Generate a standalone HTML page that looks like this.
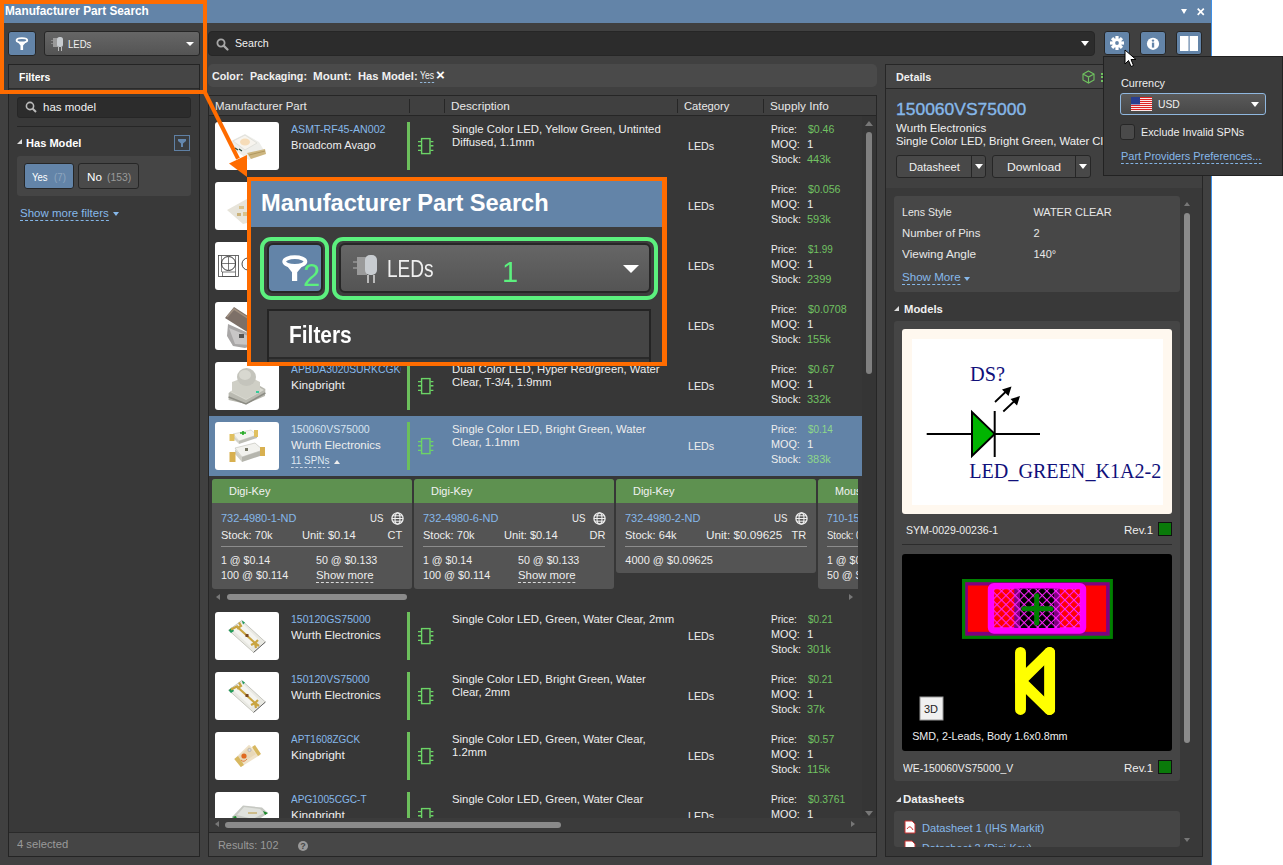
<!DOCTYPE html><html><head><meta charset="utf-8"><style>
*{box-sizing:border-box;margin:0;padding:0}
html,body{width:1283px;height:865px;overflow:hidden;background:#fff}
body{font-family:"Liberation Sans", sans-serif;font-size:11.5px;color:#e6e6e6;position:relative}
.ab{position:absolute}
.t{position:absolute;white-space:nowrap;line-height:14px}
.lnk{color:#86b8ea}
.grn{color:#71c162}
</style></head><body>
<div class="ab" style="left:0;top:0;width:1212px;height:865px;background:#404040"></div><div class="ab" style="left:1211px;top:0;width:1px;height:865px;background:#3d8fe6"></div><div class="ab" style="left:0;top:0;width:1211px;height:23px;background:#6384a8"></div><div class="t" style="left:5px;top:4px;font-weight:bold;font-size:12px;color:#fff;transform:scaleX(0.9848);transform-origin:0 0">Manufacturer Part Search</div><div class="ab" style="left:1181px;top:9px;width:0;height:0;border-left:3.5px solid transparent;border-right:3.5px solid transparent;border-top:5.5px solid #fff"></div><svg class="ab" style="left:1197px;top:8px" width="7.5" height="7.5" viewBox="0 0 7.5 7.5"><path d="M0.7 0.7 L6.8 6.8 M6.8 0.7 L0.7 6.8" stroke="#fff" stroke-width="1.7"/></svg><div class="ab" style="left:8px;top:31px;width:28px;height:25px;background:#6384a8;border:1px solid #262626;border-radius:3px"></div><svg class="ab" style="left:14px;top:36px" width="16" height="16" viewBox="0 0 16 16"><ellipse cx="7.9" cy="4.3" rx="5.3" ry="2.2" fill="none" stroke="#fff" stroke-width="1.9"/><path d="M2.6 4.8 Q8 8.2 13.2 4.8 L9.1 9.6 L9.1 14 L6.5 14 L6.5 9.6 Z" fill="#fff"/></svg><div class="ab" style="left:44px;top:31px;width:156px;height:25px;background:linear-gradient(#666,#545454);border:1px solid #262626;border-radius:3px"></div><svg class="ab" style="left:51px;top:36px" width="14" height="15" viewBox="0 0 14 15"><rect x="2" y="2" width="5" height="9" fill="#9a9a9a"/><rect x="6" y="1" width="6" height="10" rx="2.5" fill="#c8ccd0"/><rect x="7" y="11" width="1" height="4" fill="#bbb"/><rect x="10" y="11" width="1" height="4" fill="#bbb"/><rect x="0" y="4" width="2" height="1" fill="#888"/><rect x="0" y="7" width="2" height="1" fill="#888"/></svg><div class="t" style="left:68px;top:37px;color:#f0f0f0;transform:scaleX(0.8283);transform-origin:0 0">LEDs</div><div class="ab" style="left:186px;top:42px;width:0;height:0;border-left:4.25px solid transparent;border-right:4.25px solid transparent;border-top:4.5px solid #fff"></div><div class="ab" style="left:8px;top:64px;width:192px;height:793px;background:#393939;border:1px solid #242424"></div><div class="ab" style="left:9px;top:65px;width:190px;height:24px;background:#454545;border-bottom:1px solid #2a2a2a"></div><div class="t" style="left:19px;top:70px;font-weight:bold;font-size:11.5px;color:#fff;transform:scaleX(0.9087);transform-origin:0 0">Filters</div><div class="ab" style="left:17px;top:97px;width:174px;height:21px;background:#2c2c2c;border:1px solid #262626;border-radius:3px"></div><svg class="ab" style="left:25px;top:101px" width="12" height="12" viewBox="0 0 12 12"><circle cx="5" cy="5" r="3.6" fill="none" stroke="#bbb" stroke-width="1.6"/><path d="M7.5 7.5 L11 11" stroke="#bbb" stroke-width="2"/></svg><div class="t" style="left:42.5px;top:100px;color:#f0f0f0;transform:scaleX(0.9980);transform-origin:0 0">has model</div><div class="ab" style="left:17px;top:126px;width:174px;height:1px;background:#262626"></div><div class="ab" style="left:17px;top:139px;width:0;height:0;border-left:5px solid transparent;border-bottom:5px solid #ddd"></div><div class="t" style="left:26px;top:136px;font-weight:bold;color:#fff;transform:scaleX(0.9631);transform-origin:0 0">Has Model</div><div class="ab" style="left:174px;top:135px;width:16px;height:16px;border:1px solid #5f80a4;background:#3a3d40"></div><svg class="ab" style="left:177px;top:138px" width="10" height="10" viewBox="0 0 10 10"><path d="M1 1 H9 V3 L6 5.5 V9 H4 V5.5 L1 3 Z" fill="#6487ad"/></svg><div class="ab" style="left:17px;top:156px;width:174px;height:40px;background:#454545;border-radius:3px"></div><div class="ab" style="left:24px;top:163px;width:50px;height:26px;background:#6384a8;border:1px solid #262626;border-radius:3px"></div><div class="t" style="left:32px;top:170px;color:#fff;transform:scaleX(0.8311);transform-origin:0 0">Yes</div><div class="t" style="left:54.2px;top:170px;color:#8ea6bf;transform:scaleX(0.8436);transform-origin:0 0">(7)</div><div class="ab" style="left:78px;top:163px;width:61px;height:26px;background:#4a4a4a;border:1px solid #262626;border-radius:3px"></div><div class="t" style="left:86.5px;top:170px;color:#fff;transform:scaleX(1.0136);transform-origin:0 0">No</div><div class="t" style="left:107px;top:170px;color:#9a9a9a;transform:scaleX(0.9031);transform-origin:0 0">(153)</div><div class="t lnk" style="left:20.4px;top:207px;border-bottom:1px dashed #86b8ea;line-height:13px;transform:scaleX(0.9991);transform-origin:0 0">Show more filters</div><div class="ab" style="left:113px;top:212px;width:0;height:0;border-left:3.5px solid transparent;border-right:3.5px solid transparent;border-top:4px solid #86b8ea"></div><div class="ab" style="left:9px;top:832px;width:190px;height:24px;background:#454545;border-top:1px solid #2a2a2a"></div><div class="t" style="left:17px;top:837px;color:#9a9a9a;transform:scaleX(0.9764);transform-origin:0 0">4 selected</div>
<div class="ab" style="left:208px;top:31px;width:887px;height:25px;background:#2c2c2c;border:1px solid #262626;border-radius:4px"></div><svg class="ab" style="left:216px;top:37.5px" width="13" height="13" viewBox="0 0 13 13"><circle cx="5" cy="5" r="3.6" fill="none" stroke="#a8a8a8" stroke-width="1.8"/><path d="M7.6 7.6 L11.5 11.5" stroke="#a8a8a8" stroke-width="2.2" stroke-linecap="round"/></svg><div class="t" style="left:235px;top:36px;color:#f0f0f0;transform:scaleX(0.9239);transform-origin:0 0">Search</div><div class="ab" style="left:1081px;top:41px;width:0;height:0;border-left:4.5px solid transparent;border-right:4.5px solid transparent;border-top:5px solid #fff"></div><div class="ab" style="left:208px;top:64px;width:669px;height:23px;background:#4a4a4a;border-radius:5px"></div><div class="t" style="left:212px;top:69px;font-weight:bold;color:#f0f0f0;font-size:11px;transform:scaleX(0.9773);transform-origin:0 0">Color:</div><div class="t" style="left:249.7px;top:69px;font-weight:bold;color:#f0f0f0;font-size:11px;transform:scaleX(0.9703);transform-origin:0 0">Packaging:</div><div class="t" style="left:312.6px;top:69px;font-weight:bold;color:#f0f0f0;font-size:11px;transform:scaleX(1.0560);transform-origin:0 0">Mount:</div><div class="t" style="left:357.5px;top:69px;font-weight:bold;color:#f0f0f0;font-size:11px;transform:scaleX(1.0171);transform-origin:0 0">Has Model:</div><div class="t" style="left:420px;top:69px;color:#f0f0f0;border-bottom:1px dashed #9cc3ea;line-height:13px;font-size:11px;transform:scaleX(0.7861);transform-origin:0 0">Yes</div><div class="t" style="left:436px;top:68px;font-weight:bold;font-size:15px;color:#fff">&#215;</div><div class="ab" style="left:208px;top:95px;width:669px;height:738px;background:#373737;border:1px solid #262626"></div><div class="ab" style="left:209px;top:96px;width:667px;height:20px;background:#404040;border-bottom:1px solid #262626"></div><div class="ab" style="left:409px;top:99px;width:1px;height:14px;background:#262626"></div><div class="ab" style="left:444px;top:99px;width:1px;height:14px;background:#262626"></div><div class="ab" style="left:677px;top:99px;width:1px;height:14px;background:#262626"></div><div class="ab" style="left:763px;top:99px;width:1px;height:14px;background:#262626"></div><div class="t" style="left:215.4px;top:99px;color:#e8e8e8;transform:scaleX(0.9963);transform-origin:0 0">Manufacturer Part</div><div class="t" style="left:451.3px;top:99px;color:#e8e8e8;transform:scaleX(1.0205);transform-origin:0 0">Description</div><div class="t" style="left:684.2px;top:99px;color:#e8e8e8;transform:scaleX(0.9720);transform-origin:0 0">Category</div><div class="t" style="left:770.2px;top:99px;color:#e8e8e8;transform:scaleX(1.0202);transform-origin:0 0">Supply Info</div><div class="ab" style="left:862px;top:116px;width:14px;height:700px;background:#353535"></div><div class="ab" style="left:865px;top:121px;width:0;height:0;border-left:4px solid transparent;border-right:4px solid transparent;border-bottom:5px solid #777"></div><div class="ab" style="left:866px;top:132px;width:6px;height:242px;background:#808080;border-radius:3px"></div><div class="ab" style="left:865px;top:811px;width:0;height:0;border-left:4px solid transparent;border-right:4px solid transparent;border-top:5px solid #777"></div><div class="ab" style="left:209px;top:116px;width:653px;height:702px;overflow:hidden"><div class="ab" style="left:6px;top:6px;width:64px;height:48px;background:#fff;border-radius:3px;overflow:hidden"><svg width="64" height="48"><path d="M16 19 L30 12 L44 20 L50 30 L34 38 L18 27 Z" fill="#eeeeea"/><path d="M18 19 L30 13 L42 21 L30 28 Z" fill="#f7f4ee" stroke="#dcdcd6" stroke-width="0.8"/><ellipse cx="30" cy="20" rx="5" ry="3.5" fill="#f6dcb8"/><path d="M32 31 L50 27 L51 32 L36 37 Z" fill="#cdb680"/><path d="M34 33 L50 29" stroke="#a88f55" stroke-width="0.8"/><path d="M20 26 L23 28 M24 27 L27 29" stroke="#2a4a3a" stroke-width="1.2"/></svg></div><div class="ab" style="left:82px;top:6px;width:110px;height:15px;overflow:hidden"><div class="t" style="left:0.3px;top:0;color:#86b8ea;font-size:11px;transform:scaleX(0.9663);transform-origin:0 0">ASMT-RF45-AN002</div></div><div class="t" style="left:82.3px;top:22px;color:#eee;font-size:11.2px;transform:scaleX(0.9954);transform-origin:0 0">Broadcom Avago</div><div class="ab" style="left:198px;top:6px;width:3px;height:48px;background:#6cbf5c"></div><svg class="ab" style="left:208px;top:21px" width="17" height="18" viewBox="0 0 17 18"><rect x="4.6" y="1.6" width="8.4" height="15" fill="none" stroke="#6cd466" stroke-width="1.4"/><path d="M1 4.6H4M1 8.7H4M1 13.4H4M13.4 4.6H16.4M13.4 8.7H16.4M13.4 13.4H16.4" stroke="#6cd466" stroke-width="1.4"/></svg><div class="t" style="left:242.5px;top:6px;color:#eee;font-size:11.2px;transform:scaleX(1.014);transform-origin:0 0">Single Color LED, Yellow Green, Untinted</div><div class="t" style="left:242.5px;top:19px;color:#eee;font-size:11.2px;transform:scaleX(1.014);transform-origin:0 0">Diffused, 1.1mm</div><div class="t" style="left:479.4px;top:23px;color:#eee;transform:scaleX(0.9305);transform-origin:0 0">LEDs</div><div class="t" style="left:561.5px;top:6px;color:#eee;transform:scaleX(0.8801);transform-origin:0 0">Price:</div><div class="t" style="left:598.7px;top:6px;color:#71c162;font-size:11px;transform:scaleX(0.9559);transform-origin:0 0">$0.46</div><div class="t" style="left:561.5px;top:21px;color:#eee;transform:scaleX(0.9419);transform-origin:0 0">MOQ:</div><div class="t" style="left:598px;top:21px;color:#eee">1</div><div class="t" style="left:561.5px;top:36px;color:#eee;transform:scaleX(0.9414);transform-origin:0 0">Stock:</div><div class="t" style="left:598px;top:36px;color:#71c162;font-size:11px">443k</div><div class="ab" style="left:6px;top:66px;width:64px;height:48px;background:#fff;border-radius:3px;overflow:hidden"><svg width="64" height="48"><path d="M12 28 L30 18 L34 16 L36 40 L28 42 Z" fill="#e7e4da"/><rect x="24" y="24" width="5" height="3" fill="#d9c28c"/><rect x="28" y="30" width="5" height="4" fill="#d9c28c"/><rect x="22" y="31" width="4" height="3" fill="#cbb27a"/></svg></div><div class="ab" style="left:198px;top:66px;width:3px;height:48px;background:#6cbf5c"></div><svg class="ab" style="left:208px;top:81px" width="17" height="18" viewBox="0 0 17 18"><rect x="4.6" y="1.6" width="8.4" height="15" fill="none" stroke="#6cd466" stroke-width="1.4"/><path d="M1 4.6H4M1 8.7H4M1 13.4H4M13.4 4.6H16.4M13.4 8.7H16.4M13.4 13.4H16.4" stroke="#6cd466" stroke-width="1.4"/></svg><div class="t" style="left:242.5px;top:66px;color:#eee;font-size:11.2px;transform:scaleX(1.014);transform-origin:0 0"></div><div class="t" style="left:479.4px;top:83px;color:#eee;transform:scaleX(0.9305);transform-origin:0 0">LEDs</div><div class="t" style="left:561.5px;top:66px;color:#eee;transform:scaleX(0.8801);transform-origin:0 0">Price:</div><div class="t" style="left:598.7px;top:66px;color:#71c162;font-size:11px;transform:scaleX(0.9664);transform-origin:0 0">$0.056</div><div class="t" style="left:561.5px;top:81px;color:#eee;transform:scaleX(0.9419);transform-origin:0 0">MOQ:</div><div class="t" style="left:598px;top:81px;color:#eee">1</div><div class="t" style="left:561.5px;top:96px;color:#eee;transform:scaleX(0.9414);transform-origin:0 0">Stock:</div><div class="t" style="left:598px;top:96px;color:#71c162;font-size:11px">593k</div><div class="ab" style="left:6px;top:126px;width:64px;height:48px;background:#fff;border-radius:3px;overflow:hidden"><svg width="64" height="48"><rect x="3.5" y="13.5" width="20" height="21" fill="none" stroke="#444" stroke-width="0.8"/><path d="M6.5 13.5 V30 M20.5 13.5 V30" stroke="#555" stroke-width="0.7"/><circle cx="13.5" cy="21.5" r="7" fill="none" stroke="#333" stroke-width="1"/><path d="M13.5 15V28M7 21.5H20" stroke="#444" stroke-width="0.7"/><rect x="7.5" y="30" width="13" height="4.5" fill="none" stroke="#444" stroke-width="0.7"/><circle cx="33" cy="22" r="6" fill="none" stroke="#333" stroke-width="0.9"/></svg></div><div class="ab" style="left:198px;top:126px;width:3px;height:48px;background:#6cbf5c"></div><svg class="ab" style="left:208px;top:141px" width="17" height="18" viewBox="0 0 17 18"><rect x="4.6" y="1.6" width="8.4" height="15" fill="none" stroke="#6cd466" stroke-width="1.4"/><path d="M1 4.6H4M1 8.7H4M1 13.4H4M13.4 4.6H16.4M13.4 8.7H16.4M13.4 13.4H16.4" stroke="#6cd466" stroke-width="1.4"/></svg><div class="t" style="left:242.5px;top:126px;color:#eee;font-size:11.2px;transform:scaleX(1.014);transform-origin:0 0"></div><div class="t" style="left:479.4px;top:143px;color:#eee;transform:scaleX(0.9305);transform-origin:0 0">LEDs</div><div class="t" style="left:561.5px;top:126px;color:#eee;transform:scaleX(0.8801);transform-origin:0 0">Price:</div><div class="t" style="left:598.7px;top:126px;color:#71c162;font-size:11px;transform:scaleX(0.8975);transform-origin:0 0">$1.99</div><div class="t" style="left:561.5px;top:141px;color:#eee;transform:scaleX(0.9419);transform-origin:0 0">MOQ:</div><div class="t" style="left:598px;top:141px;color:#eee">1</div><div class="t" style="left:561.5px;top:156px;color:#eee;transform:scaleX(0.9414);transform-origin:0 0">Stock:</div><div class="t" style="left:598px;top:156px;color:#71c162;font-size:11px">2399</div><div class="ab" style="left:6px;top:186px;width:64px;height:48px;background:#fff;border-radius:3px;overflow:hidden"><svg width="64" height="48"><path d="M10 16 L19 5 L50 25 L42 36 Z" fill="#7d7068"/><path d="M12 15 L19 7 L48 26" stroke="#a09080" stroke-width="1.5" fill="none"/><path d="M13 22 L40 34 L44 42 L30 46 L18 44 L12 34 Z" fill="#a8a6a6"/><path d="M14 26 L38 36 L36 43 L20 42 Z" fill="#c8c6c6"/><rect x="24" y="32" width="5" height="4" fill="#555"/></svg></div><div class="ab" style="left:198px;top:186px;width:3px;height:48px;background:#6cbf5c"></div><svg class="ab" style="left:208px;top:201px" width="17" height="18" viewBox="0 0 17 18"><rect x="4.6" y="1.6" width="8.4" height="15" fill="none" stroke="#6cd466" stroke-width="1.4"/><path d="M1 4.6H4M1 8.7H4M1 13.4H4M13.4 4.6H16.4M13.4 8.7H16.4M13.4 13.4H16.4" stroke="#6cd466" stroke-width="1.4"/></svg><div class="t" style="left:242.5px;top:186px;color:#eee;font-size:11.2px;transform:scaleX(1.014);transform-origin:0 0"></div><div class="t" style="left:479.4px;top:203px;color:#eee;transform:scaleX(0.9305);transform-origin:0 0">LEDs</div><div class="t" style="left:561.5px;top:186px;color:#eee;transform:scaleX(0.8801);transform-origin:0 0">Price:</div><div class="t" style="left:598.7px;top:186px;color:#71c162;font-size:11px;transform:scaleX(0.9737);transform-origin:0 0">$0.0708</div><div class="t" style="left:561.5px;top:201px;color:#eee;transform:scaleX(0.9419);transform-origin:0 0">MOQ:</div><div class="t" style="left:598px;top:201px;color:#eee">1</div><div class="t" style="left:561.5px;top:216px;color:#eee;transform:scaleX(0.9414);transform-origin:0 0">Stock:</div><div class="t" style="left:598px;top:216px;color:#71c162;font-size:11px">155k</div><div class="ab" style="left:6px;top:246px;width:64px;height:48px;background:#fff;border-radius:3px;overflow:hidden"><svg width="64" height="48"><path d="M13.6 31 L33 17 L50.4 27 L50 34 L31 42 L13.6 38 Z" fill="#b9b9b0"/><path d="M15 30 L33 19 L49 28 L31 38 Z" fill="#d9d9d0"/><path d="M17 20 L33 14 L45 20 L45 30 L31 37 L17 30 Z" fill="#cfcfc6"/><ellipse cx="31.5" cy="15" rx="9.5" ry="9" fill="#c4c4bc"/><ellipse cx="30" cy="13" rx="6" ry="5" fill="#d8d8d0"/><path d="M13.6 35 L31 42 L50.4 31" stroke="#8c8c84" stroke-width="1.5" fill="none"/><rect x="41" y="29" width="3" height="2" fill="#3c9"/></svg></div><div class="ab" style="left:82px;top:246px;width:110px;height:15px;overflow:hidden"><div class="t" style="left:0.3px;top:0;color:#86b8ea;font-size:11px;transform:scaleX(0.9423);transform-origin:0 0">APBDA3020SURKCGKC</div></div><div class="t" style="left:82.3px;top:262px;color:#eee;font-size:11.2px;transform:scaleX(1.0669);transform-origin:0 0">Kingbright</div><div class="ab" style="left:198px;top:246px;width:3px;height:48px;background:#6cbf5c"></div><svg class="ab" style="left:208px;top:261px" width="17" height="18" viewBox="0 0 17 18"><rect x="4.6" y="1.6" width="8.4" height="15" fill="none" stroke="#6cd466" stroke-width="1.4"/><path d="M1 4.6H4M1 8.7H4M1 13.4H4M13.4 4.6H16.4M13.4 8.7H16.4M13.4 13.4H16.4" stroke="#6cd466" stroke-width="1.4"/></svg><div class="t" style="left:242.5px;top:246px;color:#eee;font-size:11.2px;transform:scaleX(1.014);transform-origin:0 0">Dual Color LED, Hyper Red/green, Water</div><div class="t" style="left:242.5px;top:259px;color:#eee;font-size:11.2px;transform:scaleX(1.014);transform-origin:0 0">Clear, T-3/4, 1.9mm</div><div class="t" style="left:479.4px;top:263px;color:#eee;transform:scaleX(0.9305);transform-origin:0 0">LEDs</div><div class="t" style="left:561.5px;top:246px;color:#eee;transform:scaleX(0.8801);transform-origin:0 0">Price:</div><div class="t" style="left:598.7px;top:246px;color:#71c162;font-size:11px;transform:scaleX(0.9559);transform-origin:0 0">$0.67</div><div class="t" style="left:561.5px;top:261px;color:#eee;transform:scaleX(0.9419);transform-origin:0 0">MOQ:</div><div class="t" style="left:598px;top:261px;color:#eee">1</div><div class="t" style="left:561.5px;top:276px;color:#eee;transform:scaleX(0.9414);transform-origin:0 0">Stock:</div><div class="t" style="left:598px;top:276px;color:#71c162;font-size:11px">332k</div><div class="ab" style="left:0;top:300px;width:653px;height:60px;background:#6283a7"></div><div class="ab" style="left:6px;top:306px;width:64px;height:48px;background:#fff;border-radius:3px;overflow:hidden"><svg width="64" height="48"><path d="M18 12 L36 8 L42 13 L24 19 Z" fill="#f4f4f0" stroke="#c8c8c0" stroke-width="0.6"/><path d="M18 13 L24 19 L24 22 L18 16 Z" fill="#d4d4cc"/><path d="M24 19 L42 13 L42 16 L24 22 Z" fill="#bdbdb5"/><rect x="14.5" y="12" width="5" height="7" fill="#e0c060"/><rect x="39" y="8" width="4" height="7" fill="#e0c060"/><path d="M25 11 H31 M28 9 V13" stroke="#22aa22" stroke-width="1.6"/><path d="M20 26 L40 21 L48 28 L27 35 Z" fill="#f2f2ee" stroke="#bdbdb5" stroke-width="0.6"/><path d="M27 35 L48 28 L48 33 L27 40 Z" fill="#b5b5ad"/><path d="M20 27 L27 35 L27 40 L20 32 Z" fill="#d0d0c8"/><rect x="14.5" y="30" width="6" height="10" fill="#d8b050"/><rect x="45" y="25" width="5" height="9" fill="#d8b050"/><rect x="30" y="26" width="3" height="3" fill="#776"/></svg></div><div class="ab" style="left:82px;top:306px;width:110px;height:15px;overflow:hidden"><div class="t" style="left:0.3px;top:0;color:#d7e3f0;font-size:11px;transform:scaleX(0.9603);transform-origin:0 0">150060VS75000</div></div><div class="t" style="left:82.3px;top:322px;color:#eee;font-size:11.2px;transform:scaleX(1.0266);transform-origin:0 0">Wurth Electronics</div><div class="t" style="left:82.3px;top:338px;color:#dfe8f2;font-size:11px;border-bottom:1px dashed #cfd9e5;line-height:13px;transform:scaleX(0.9004);transform-origin:0 0">11 SPNs</div><div class="ab" style="left:125px;top:344px;width:0;height:0;border-left:3px solid transparent;border-right:3px solid transparent;border-bottom:4px solid #eee"></div><div class="ab" style="left:198px;top:306px;width:3px;height:48px;background:#6cbf5c"></div><svg class="ab" style="left:208px;top:321px" width="17" height="18" viewBox="0 0 17 18"><rect x="4.6" y="1.6" width="8.4" height="15" fill="none" stroke="#6cd466" stroke-width="1.4"/><path d="M1 4.6H4M1 8.7H4M1 13.4H4M13.4 4.6H16.4M13.4 8.7H16.4M13.4 13.4H16.4" stroke="#6cd466" stroke-width="1.4"/></svg><div class="t" style="left:242.5px;top:306px;color:#eee;font-size:11.2px;transform:scaleX(1.014);transform-origin:0 0">Single Color LED, Bright Green, Water</div><div class="t" style="left:242.5px;top:319px;color:#eee;font-size:11.2px;transform:scaleX(1.014);transform-origin:0 0">Clear, 1.1mm</div><div class="t" style="left:479.4px;top:323px;color:#eee;transform:scaleX(0.9305);transform-origin:0 0">LEDs</div><div class="t" style="left:561.5px;top:306px;color:#eee;transform:scaleX(0.8801);transform-origin:0 0">Price:</div><div class="t" style="left:598.7px;top:306px;color:#8ed88a;font-size:11px;transform:scaleX(0.8975);transform-origin:0 0">$0.14</div><div class="t" style="left:561.5px;top:321px;color:#eee;transform:scaleX(0.9419);transform-origin:0 0">MOQ:</div><div class="t" style="left:598px;top:321px;color:#eee">1</div><div class="t" style="left:561.5px;top:336px;color:#eee;transform:scaleX(0.9414);transform-origin:0 0">Stock:</div><div class="t" style="left:598px;top:336px;color:#8ed88a;font-size:11px">383k</div><div class="ab" style="left:6px;top:496px;width:64px;height:48px;background:#fff;border-radius:3px;overflow:hidden"><svg width="64" height="48"><path d="M13.6 18.2 L26.8 8.5 L50.4 30 L38.6 40.4 Z" fill="#e9e9e3" stroke="#c8c8c0" stroke-width="1"/><path d="M18 18 L27 11 L44 28 L36 35 Z" fill="#f4f4f0"/><path d="M13.6 18.2 L17 15.5 L19 19 L16 21 Z" fill="#1f9a5a"/><path d="M26.8 8.5 L30 10.5 L28 12.5 Z" fill="#1f9a5a"/><path d="M16 17.5 L22 14.5 L24 17 M24 10.5 L26 14 L22 16.5 M23.5 16 L40 31 M36 33 L40 31 L44 34 M43 28 L40 31 L41 36" stroke="#c9a440" stroke-width="2.2" fill="none"/><rect x="30.5" y="22" width="3" height="3" fill="#7a4a20"/><path d="M38.6 40.4 L50.4 30" stroke="#666" stroke-width="1"/></svg></div><div class="ab" style="left:82px;top:496px;width:110px;height:15px;overflow:hidden"><div class="t" style="left:0.3px;top:0;color:#86b8ea;font-size:11px;transform:scaleX(0.9570);transform-origin:0 0">150120GS75000</div></div><div class="t" style="left:82.3px;top:512px;color:#eee;font-size:11.2px;transform:scaleX(1.0266);transform-origin:0 0">Wurth Electronics</div><div class="ab" style="left:198px;top:496px;width:3px;height:48px;background:#6cbf5c"></div><svg class="ab" style="left:208px;top:511px" width="17" height="18" viewBox="0 0 17 18"><rect x="4.6" y="1.6" width="8.4" height="15" fill="none" stroke="#6cd466" stroke-width="1.4"/><path d="M1 4.6H4M1 8.7H4M1 13.4H4M13.4 4.6H16.4M13.4 8.7H16.4M13.4 13.4H16.4" stroke="#6cd466" stroke-width="1.4"/></svg><div class="t" style="left:242.5px;top:496px;color:#eee;font-size:11.2px;transform:scaleX(1.014);transform-origin:0 0">Single Color LED, Green, Water Clear, 2mm</div><div class="t" style="left:479.4px;top:513px;color:#eee;transform:scaleX(0.9305);transform-origin:0 0">LEDs</div><div class="t" style="left:561.5px;top:496px;color:#eee;transform:scaleX(0.8801);transform-origin:0 0">Price:</div><div class="t" style="left:598.7px;top:496px;color:#71c162;font-size:11px;transform:scaleX(0.8975);transform-origin:0 0">$0.21</div><div class="t" style="left:561.5px;top:511px;color:#eee;transform:scaleX(0.9419);transform-origin:0 0">MOQ:</div><div class="t" style="left:598px;top:511px;color:#eee">1</div><div class="t" style="left:561.5px;top:526px;color:#eee;transform:scaleX(0.9414);transform-origin:0 0">Stock:</div><div class="t" style="left:598px;top:526px;color:#71c162;font-size:11px">301k</div><div class="ab" style="left:6px;top:556px;width:64px;height:48px;background:#fff;border-radius:3px;overflow:hidden"><svg width="64" height="48"><path d="M13.6 18.2 L26.8 8.5 L50.4 30 L38.6 40.4 Z" fill="#e9e9e3" stroke="#c8c8c0" stroke-width="1"/><path d="M18 18 L27 11 L44 28 L36 35 Z" fill="#f4f4f0"/><path d="M13.6 18.2 L17 15.5 L19 19 L16 21 Z" fill="#1f9a5a"/><path d="M26.8 8.5 L30 10.5 L28 12.5 Z" fill="#1f9a5a"/><path d="M16 17.5 L22 14.5 L24 17 M24 10.5 L26 14 L22 16.5 M23.5 16 L40 31 M36 33 L40 31 L44 34 M43 28 L40 31 L41 36" stroke="#c9a440" stroke-width="2.2" fill="none"/><rect x="30.5" y="22" width="3" height="3" fill="#7a4a20"/><path d="M38.6 40.4 L50.4 30" stroke="#666" stroke-width="1"/></svg></div><div class="ab" style="left:82px;top:556px;width:110px;height:15px;overflow:hidden"><div class="t" style="left:0.3px;top:0;color:#86b8ea;font-size:11px;transform:scaleX(0.9591);transform-origin:0 0">150120VS75000</div></div><div class="t" style="left:82.3px;top:572px;color:#eee;font-size:11.2px;transform:scaleX(1.0266);transform-origin:0 0">Wurth Electronics</div><div class="ab" style="left:198px;top:556px;width:3px;height:48px;background:#6cbf5c"></div><svg class="ab" style="left:208px;top:571px" width="17" height="18" viewBox="0 0 17 18"><rect x="4.6" y="1.6" width="8.4" height="15" fill="none" stroke="#6cd466" stroke-width="1.4"/><path d="M1 4.6H4M1 8.7H4M1 13.4H4M13.4 4.6H16.4M13.4 8.7H16.4M13.4 13.4H16.4" stroke="#6cd466" stroke-width="1.4"/></svg><div class="t" style="left:242.5px;top:556px;color:#eee;font-size:11.2px;transform:scaleX(1.014);transform-origin:0 0">Single Color LED, Bright Green, Water</div><div class="t" style="left:242.5px;top:569px;color:#eee;font-size:11.2px;transform:scaleX(1.014);transform-origin:0 0">Clear, 2mm</div><div class="t" style="left:479.4px;top:573px;color:#eee;transform:scaleX(0.9305);transform-origin:0 0">LEDs</div><div class="t" style="left:561.5px;top:556px;color:#eee;transform:scaleX(0.8801);transform-origin:0 0">Price:</div><div class="t" style="left:598.7px;top:556px;color:#71c162;font-size:11px;transform:scaleX(0.8975);transform-origin:0 0">$0.21</div><div class="t" style="left:561.5px;top:571px;color:#eee;transform:scaleX(0.9419);transform-origin:0 0">MOQ:</div><div class="t" style="left:598px;top:571px;color:#eee">1</div><div class="t" style="left:561.5px;top:586px;color:#eee;transform:scaleX(0.9414);transform-origin:0 0">Stock:</div><div class="t" style="left:598px;top:586px;color:#71c162;font-size:11px">37k</div><div class="ab" style="left:6px;top:616px;width:64px;height:48px;background:#fff;border-radius:3px;overflow:hidden"><svg width="64" height="48"><path d="M19.3 27 L34 12.8 L44.8 23.2 L25.8 35 Z" fill="#efe2c8"/><path d="M22 26 L34 15 L41 22 L27 31 Z" fill="#e8d8b8"/><path d="M19.3 27 L23 24 L29 33 L25.8 35 Z" fill="#d8b860"/><path d="M37 15 L40 13 L46 22 L43 24 Z" fill="#d8b860"/><circle cx="29" cy="24" r="2.6" fill="#e06a20"/><circle cx="34.5" cy="18" r="1.6" fill="#ddd" stroke="#999" stroke-width="0.5"/><path d="M26 28 Q29 31 32 27" stroke="#e08040" fill="none"/></svg></div><div class="ab" style="left:82px;top:616px;width:110px;height:15px;overflow:hidden"><div class="t" style="left:0.3px;top:0;color:#86b8ea;font-size:11px;transform:scaleX(0.9055);transform-origin:0 0">APT1608ZGCK</div></div><div class="t" style="left:82.3px;top:632px;color:#eee;font-size:11.2px;transform:scaleX(1.0669);transform-origin:0 0">Kingbright</div><div class="ab" style="left:198px;top:616px;width:3px;height:48px;background:#6cbf5c"></div><svg class="ab" style="left:208px;top:631px" width="17" height="18" viewBox="0 0 17 18"><rect x="4.6" y="1.6" width="8.4" height="15" fill="none" stroke="#6cd466" stroke-width="1.4"/><path d="M1 4.6H4M1 8.7H4M1 13.4H4M13.4 4.6H16.4M13.4 8.7H16.4M13.4 13.4H16.4" stroke="#6cd466" stroke-width="1.4"/></svg><div class="t" style="left:242.5px;top:616px;color:#eee;font-size:11.2px;transform:scaleX(1.014);transform-origin:0 0">Single Color LED, Green, Water Clear,</div><div class="t" style="left:242.5px;top:629px;color:#eee;font-size:11.2px;transform:scaleX(1.014);transform-origin:0 0">1.2mm</div><div class="t" style="left:479.4px;top:633px;color:#eee;transform:scaleX(0.9305);transform-origin:0 0">LEDs</div><div class="t" style="left:561.5px;top:616px;color:#eee;transform:scaleX(0.8801);transform-origin:0 0">Price:</div><div class="t" style="left:598.7px;top:616px;color:#71c162;font-size:11px;transform:scaleX(0.9559);transform-origin:0 0">$0.57</div><div class="t" style="left:561.5px;top:631px;color:#eee;transform:scaleX(0.9419);transform-origin:0 0">MOQ:</div><div class="t" style="left:598px;top:631px;color:#eee">1</div><div class="t" style="left:561.5px;top:646px;color:#eee;transform:scaleX(0.9414);transform-origin:0 0">Stock:</div><div class="t" style="left:598px;top:646px;color:#71c162;font-size:11px">115k</div><div class="ab" style="left:6px;top:676px;width:64px;height:48px;background:#fff;border-radius:3px;overflow:hidden"><svg width="64" height="48"><path d="M17 25 L28 13.5 L47 15.5 L53 21 L40 30 L20 30 Z" fill="#c6c8c2"/><path d="M22 23 L29 15 L45 17 L49 21 L38 27 Z" fill="#dfe1dc"/><path d="M33 21 H42" stroke="#c8b070" stroke-width="1.5"/><path d="M17 25 L21 24 L22 27 Z" fill="#1a8a2a"/><path d="M48 19 L53 21 L50 23 Z" fill="#1a8a2a"/></svg></div><div class="ab" style="left:82px;top:676px;width:110px;height:15px;overflow:hidden"><div class="t" style="left:0.3px;top:0;color:#86b8ea;font-size:11px;transform:scaleX(0.9154);transform-origin:0 0">APG1005CGC-T</div></div><div class="t" style="left:82.3px;top:692px;color:#eee;font-size:11.2px;transform:scaleX(1.0669);transform-origin:0 0">Kingbright</div><div class="ab" style="left:198px;top:676px;width:3px;height:48px;background:#6cbf5c"></div><svg class="ab" style="left:208px;top:691px" width="17" height="18" viewBox="0 0 17 18"><rect x="4.6" y="1.6" width="8.4" height="15" fill="none" stroke="#6cd466" stroke-width="1.4"/><path d="M1 4.6H4M1 8.7H4M1 13.4H4M13.4 4.6H16.4M13.4 8.7H16.4M13.4 13.4H16.4" stroke="#6cd466" stroke-width="1.4"/></svg><div class="t" style="left:242.5px;top:676px;color:#eee;font-size:11.2px;transform:scaleX(1.014);transform-origin:0 0">Single Color LED, Green, Water Clear</div><div class="t" style="left:479.4px;top:693px;color:#eee;transform:scaleX(0.9305);transform-origin:0 0">LEDs</div><div class="t" style="left:561.5px;top:676px;color:#eee;transform:scaleX(0.8801);transform-origin:0 0">Price:</div><div class="t" style="left:598.7px;top:676px;color:#71c162;font-size:11px;transform:scaleX(0.9333);transform-origin:0 0">$0.3761</div><div class="t" style="left:561.5px;top:691px;color:#eee;transform:scaleX(0.9419);transform-origin:0 0">MOQ:</div><div class="t" style="left:598px;top:691px;color:#eee">1</div><div class="t" style="left:561.5px;top:706px;color:#eee;transform:scaleX(0.9414);transform-origin:0 0">Stock:</div></div>
<div class="ab" style="left:209px;top:476px;width:653px;height:130px;background:#373737"></div><div class="ab" style="left:209px;top:476px;width:649px;height:130px;overflow:hidden"><div class="ab" style="left:3px;top:3px;width:200px;height:110px;background:#545454;border-radius:3px;overflow:hidden"><div class="ab" style="left:0;top:0;width:200px;height:24px;background:#5e9150"></div><div class="t" style="left:16.5px;top:5px;color:#f2f2f2;transform:scaleX(0.9541);transform-origin:0 0">Digi-Key</div><div class="t" style="left:9.3px;top:32px;color:#86b8ea;font-size:11px;transform:scaleX(0.9937);transform-origin:0 0">732-4980-1-ND</div><div class="t" style="left:157.6px;top:32px;color:#eee;transform:scaleX(0.8402);transform-origin:0 0">US</div><svg class="ab" style="left:179px;top:33px" width="13" height="13" viewBox="0 0 13 13"><circle cx="6.5" cy="6.5" r="5.6" fill="none" stroke="#eee" stroke-width="1.3"/><ellipse cx="6.5" cy="6.5" rx="2.5" ry="5.6" fill="none" stroke="#eee" stroke-width="1.1"/><path d="M1 6.5H12M2 3.8H11M2 9.2H11" stroke="#eee" stroke-width="1"/></svg><div class="t" style="left:9.3px;top:49px;color:#eee;transform:scaleX(0.9603);transform-origin:0 0">Stock: 70k</div><div class="t" style="left:90.4px;top:49px;color:#eee;transform:scaleX(0.9658);transform-origin:0 0">Unit: $0.14</div><div class="t" style="left:175.6px;top:49px;color:#eee;font-size:11px">CT</div><div class="ab" style="left:9px;top:67px;width:182px;height:1px;background:#8c8c8c"></div><div class="t" style="left:9.3px;top:74px;color:#eee;transform:scaleX(0.9231);transform-origin:0 0">1 @ $0.14</div><div class="t" style="left:103.6px;top:74px;color:#eee;transform:scaleX(0.9279);transform-origin:0 0">50 @ $0.133</div><div class="t" style="left:9.3px;top:89px;color:#eee;transform:scaleX(0.9380);transform-origin:0 0">100 @ $0.114</div><div class="t" style="left:103.6px;top:89px;color:#eee;border-bottom:1px dashed #ddd;line-height:14px;transform:scaleX(0.9885);transform-origin:0 0">Show more</div></div><div class="ab" style="left:205px;top:3px;width:200px;height:110px;background:#545454;border-radius:3px;overflow:hidden"><div class="ab" style="left:0;top:0;width:200px;height:24px;background:#5e9150"></div><div class="t" style="left:16.5px;top:5px;color:#f2f2f2;transform:scaleX(0.9541);transform-origin:0 0">Digi-Key</div><div class="t" style="left:9.3px;top:32px;color:#86b8ea;font-size:11px;transform:scaleX(0.9937);transform-origin:0 0">732-4980-6-ND</div><div class="t" style="left:157.6px;top:32px;color:#eee;transform:scaleX(0.8402);transform-origin:0 0">US</div><svg class="ab" style="left:179px;top:33px" width="13" height="13" viewBox="0 0 13 13"><circle cx="6.5" cy="6.5" r="5.6" fill="none" stroke="#eee" stroke-width="1.3"/><ellipse cx="6.5" cy="6.5" rx="2.5" ry="5.6" fill="none" stroke="#eee" stroke-width="1.1"/><path d="M1 6.5H12M2 3.8H11M2 9.2H11" stroke="#eee" stroke-width="1"/></svg><div class="t" style="left:9.3px;top:49px;color:#eee;transform:scaleX(0.9603);transform-origin:0 0">Stock: 70k</div><div class="t" style="left:90.4px;top:49px;color:#eee;transform:scaleX(0.9658);transform-origin:0 0">Unit: $0.14</div><div class="t" style="left:175.6px;top:49px;color:#eee;font-size:11px">DR</div><div class="ab" style="left:9px;top:67px;width:182px;height:1px;background:#8c8c8c"></div><div class="t" style="left:9.3px;top:74px;color:#eee;transform:scaleX(0.9231);transform-origin:0 0">1 @ $0.14</div><div class="t" style="left:103.6px;top:74px;color:#eee;transform:scaleX(0.9279);transform-origin:0 0">50 @ $0.133</div><div class="t" style="left:9.3px;top:89px;color:#eee;transform:scaleX(0.9380);transform-origin:0 0">100 @ $0.114</div><div class="t" style="left:103.6px;top:89px;color:#eee;border-bottom:1px dashed #ddd;line-height:14px;transform:scaleX(0.9885);transform-origin:0 0">Show more</div></div><div class="ab" style="left:407px;top:3px;width:200px;height:94px;background:#545454;border-radius:3px;overflow:hidden"><div class="ab" style="left:0;top:0;width:200px;height:24px;background:#5e9150"></div><div class="t" style="left:16.5px;top:5px;color:#f2f2f2;transform:scaleX(0.9541);transform-origin:0 0">Digi-Key</div><div class="t" style="left:9.3px;top:32px;color:#86b8ea;font-size:11px;transform:scaleX(0.9937);transform-origin:0 0">732-4980-2-ND</div><div class="t" style="left:157.6px;top:32px;color:#eee;transform:scaleX(0.8402);transform-origin:0 0">US</div><svg class="ab" style="left:179px;top:33px" width="13" height="13" viewBox="0 0 13 13"><circle cx="6.5" cy="6.5" r="5.6" fill="none" stroke="#eee" stroke-width="1.3"/><ellipse cx="6.5" cy="6.5" rx="2.5" ry="5.6" fill="none" stroke="#eee" stroke-width="1.1"/><path d="M1 6.5H12M2 3.8H11M2 9.2H11" stroke="#eee" stroke-width="1"/></svg><div class="t" style="left:9.3px;top:49px;color:#eee;transform:scaleX(0.9603);transform-origin:0 0">Stock: 64k</div><div class="t" style="left:90.4px;top:49px;color:#eee;transform:scaleX(1.0214);transform-origin:0 0">Unit: $0.09625</div><div class="t" style="left:175.6px;top:49px;color:#eee;font-size:11px">TR</div><div class="ab" style="left:9px;top:67px;width:182px;height:1px;background:#8c8c8c"></div><div class="t" style="left:9.3px;top:74px;color:#eee;font-size:11px">4000 @ $0.09625</div></div><div class="ab" style="left:609px;top:3px;width:200px;height:110px;background:#545454;border-radius:3px;overflow:hidden"><div class="ab" style="left:0;top:0;width:200px;height:24px;background:#5e9150"></div><div class="t" style="left:16.5px;top:5px;color:#f2f2f2;transform:scaleX(0.9347);transform-origin:0 0">Mouser</div><div class="t" style="left:9.3px;top:32px;color:#86b8ea;font-size:11px;transform:scaleX(0.9435);transform-origin:0 0">710-150060VS75000</div><div class="t" style="left:157.6px;top:32px;color:#eee;transform:scaleX(0.8402);transform-origin:0 0">US</div><svg class="ab" style="left:179px;top:33px" width="13" height="13" viewBox="0 0 13 13"><circle cx="6.5" cy="6.5" r="5.6" fill="none" stroke="#eee" stroke-width="1.3"/><ellipse cx="6.5" cy="6.5" rx="2.5" ry="5.6" fill="none" stroke="#eee" stroke-width="1.1"/><path d="M1 6.5H12M2 3.8H11M2 9.2H11" stroke="#eee" stroke-width="1"/></svg><div class="t" style="left:9.3px;top:49px;color:#eee;transform:scaleX(0.8262);transform-origin:0 0">Stock: 0</div><div class="t" style="left:90.4px;top:49px;color:#eee;transform:scaleX(0.9658);transform-origin:0 0">Unit: $0.14</div><div class="t" style="left:175.6px;top:49px;color:#eee;font-size:11px"></div><div class="ab" style="left:9px;top:67px;width:182px;height:1px;background:#8c8c8c"></div><div class="t" style="left:9.3px;top:74px;color:#eee;transform:scaleX(0.9231);transform-origin:0 0">1 @ $0.14</div><div class="t" style="left:103.6px;top:74px;color:#eee;transform:scaleX(0.9279);transform-origin:0 0">50 @ $0.133</div><div class="t" style="left:9.3px;top:89px;color:#eee;transform:scaleX(0.9279);transform-origin:0 0">50 @ $0.133</div><div class="t" style="left:103.6px;top:89px;color:#eee;border-bottom:1px dashed #ddd;line-height:14px;transform:scaleX(0.9885);transform-origin:0 0">Show more</div></div><div class="ab" style="left:7px;top:118px;width:0;height:0;border-top:3.5px solid transparent;border-bottom:3.5px solid transparent;border-right:4px solid #777"></div><div class="ab" style="left:18px;top:118px;width:180px;height:6px;background:#8a8a8a;border-radius:3px"></div><div class="ab" style="left:640px;top:118px;width:0;height:0;border-top:3.5px solid transparent;border-bottom:3.5px solid transparent;border-left:4px solid #777"></div></div><div class="ab" style="left:209px;top:818px;width:667px;height:14px;background:#3b3b3b"></div><div class="ab" style="left:215px;top:821px;width:0;height:0;border-top:3.5px solid transparent;border-bottom:3.5px solid transparent;border-right:4px solid #777"></div><div class="ab" style="left:225px;top:822px;width:336px;height:6px;background:#8a8a8a;border-radius:3px"></div><div class="ab" style="left:851px;top:821px;width:0;height:0;border-top:3.5px solid transparent;border-bottom:3.5px solid transparent;border-left:4px solid #777"></div><div class="ab" style="left:208px;top:832px;width:669px;height:25px;background:#474747;border:1px solid #262626"></div><div class="t" style="left:217.5px;top:838px;color:#9a9a9a;transform:scaleX(0.9460);transform-origin:0 0">Results: 102</div><div class="ab" style="left:298px;top:841px;width:10px;height:10px;border-radius:50%;background:#9a9a9a;color:#474747;font-size:9px;font-weight:bold;text-align:center;line-height:11px">?</div>
<div class="ab" style="left:1104px;top:31px;width:26px;height:24px;background:#6384a8;border:1px solid #262626;border-radius:3px"></div><div class="ab" style="left:1140px;top:31px;width:26px;height:24px;background:#6384a8;border:1px solid #262626;border-radius:3px"></div><div class="ab" style="left:1176px;top:31px;width:26px;height:24px;background:#6384a8;border:1px solid #262626;border-radius:3px"></div><svg class="ab" style="left:1109px;top:35px" width="16" height="16" viewBox="0 0 16 16"><g fill="#fff" transform="translate(8 8)"><circle r="4.6"/><rect x="-1.6" y="-7" width="3.2" height="3.5" transform="rotate(0)"/><rect x="-1.6" y="-7" width="3.2" height="3.5" transform="rotate(45)"/><rect x="-1.6" y="-7" width="3.2" height="3.5" transform="rotate(90)"/><rect x="-1.6" y="-7" width="3.2" height="3.5" transform="rotate(135)"/><rect x="-1.6" y="-7" width="3.2" height="3.5" transform="rotate(180)"/><rect x="-1.6" y="-7" width="3.2" height="3.5" transform="rotate(225)"/><rect x="-1.6" y="-7" width="3.2" height="3.5" transform="rotate(270)"/><rect x="-1.6" y="-7" width="3.2" height="3.5" transform="rotate(315)"/><circle r="1.9" fill="#6384a8"/></g></svg><svg class="ab" style="left:1146px;top:37px" width="14" height="14" viewBox="0 0 14 14"><circle cx="7" cy="6.8" r="6.1" fill="#fff"/><rect x="5.9" y="5.6" width="2.3" height="5" fill="#6384a8"/><circle cx="7" cy="3.6" r="1.2" fill="#6384a8"/></svg><svg class="ab" style="left:1179px;top:35px" width="20" height="17" viewBox="0 0 20 17"><rect x="1" y="1" width="18" height="15" fill="#fff"/><rect x="9.5" y="1" width="1.2" height="15" fill="#6384a8"/><rect x="2" y="2" width="7" height="13" fill="#fff"/></svg><div class="ab" style="left:885px;top:64px;width:318px;height:793px;background:#393939;border:1px solid #262626"></div><div class="ab" style="left:886px;top:65px;width:316px;height:24px;background:#454545;border-bottom:1px solid #262626"></div><div class="ab" style="left:1101px;top:73px;width:3px;height:1.5px;background:#6fc25f;box-shadow:0 3px 0 #6fc25f,0 7px 0 #6fc25f"></div><div class="t" style="left:896px;top:70px;font-weight:bold;color:#f0f0f0;transform:scaleX(0.9379);transform-origin:0 0">Details</div><svg class="ab" style="left:1082px;top:70px" width="13" height="14" viewBox="0 0 13 14"><path d="M6.5 1 L12 4 V10 L6.5 13 L1 10 V4 Z M1 4 L6.5 7 L12 4 M6.5 7 V13" fill="none" stroke="#6fc25f" stroke-width="1.1"/></svg><div class="ab" style="left:886px;top:89px;width:316px;height:99px;background:#404040"></div><div class="t" style="left:896px;top:99px;color:#86b8ea;font-size:17.3px;line-height:20px;-webkit-text-stroke:0.35px #86b8ea;transform:scaleX(1.0105);transform-origin:0 0">150060VS75000</div><div class="t" style="left:896px;top:121px;color:#f0f0f0;transform:scaleX(1.0050);transform-origin:0 0">Wurth Electronics</div><div class="t" style="left:896px;top:134px;color:#f0f0f0;transform:scaleX(0.9837);transform-origin:0 0">Single Color LED, Bright Green, Water Cl</div><div class="ab" style="left:896px;top:155px;width:90px;height:23px;background:#484848;border:1px solid #262626;border-radius:3px"></div><div class="ab" style="left:971px;top:156px;width:1px;height:21px;background:#262626"></div><div class="t" style="left:908.5px;top:160px;color:#f0f0f0;transform:scaleX(0.9675);transform-origin:0 0">Datasheet</div><div class="ab" style="left:975px;top:164px;width:0;height:0;border-left:4px solid transparent;border-right:4px solid transparent;border-top:5px solid #fff"></div><div class="ab" style="left:992px;top:155px;width:99px;height:23px;background:#484848;border:1px solid #262626;border-radius:3px"></div><div class="ab" style="left:1075px;top:156px;width:1px;height:21px;background:#262626"></div><div class="t" style="left:1007.4px;top:160px;color:#f0f0f0;transform:scaleX(1.0542);transform-origin:0 0">Download</div><div class="ab" style="left:1079px;top:164px;width:0;height:0;border-left:4px solid transparent;border-right:4px solid transparent;border-top:5px solid #fff"></div><div class="ab" style="left:894px;top:196px;width:286px;height:96px;background:#474747;border-radius:3px"></div><div class="t" style="left:902px;top:205px;color:#e8e8e8;transform:scaleX(0.9230);transform-origin:0 0">Lens Style</div><div class="t" style="left:1033.4px;top:205px;color:#e8e8e8;font-size:11px">WATER CLEAR</div><div class="t" style="left:902px;top:226px;color:#e8e8e8;transform:scaleX(0.9886);transform-origin:0 0">Number of Pins</div><div class="t" style="left:1033.4px;top:226px;color:#e8e8e8;font-size:11px">2</div><div class="t" style="left:902px;top:247px;color:#e8e8e8;transform:scaleX(1.0294);transform-origin:0 0">Viewing Angle</div><div class="t" style="left:1033.4px;top:247px;color:#e8e8e8;font-size:11px">140&#176;</div><div class="t lnk" style="left:902px;top:271px;border-bottom:1px dashed #86b8ea;line-height:13px;transform:scaleX(1.0075);transform-origin:0 0">Show More</div><div class="ab" style="left:963.5px;top:277px;width:0;height:0;border-left:3.5px solid transparent;border-right:3.5px solid transparent;border-top:4px solid #86b8ea"></div><div class="ab" style="left:894px;top:306px;width:0;height:0;border-left:5px solid transparent;border-bottom:5px solid #ddd"></div><div class="t" style="left:903.5px;top:302px;font-weight:bold;color:#f0f0f0;transform:scaleX(0.9816);transform-origin:0 0">Models</div><div class="ab" style="left:894px;top:321px;width:286px;height:460px;background:#454545;border-radius:3px"></div><svg class="ab" style="left:902px;top:329px" width="270" height="185" viewBox="0 0 270 185"><rect width="270" height="185" rx="3" fill="#fff8ef"/><rect x="10" y="10" width="251" height="166" fill="#fff"/>
<text x="68" y="52" font-family="Liberation Serif" font-size="20.5" fill="#10107a" textLength="35" lengthAdjust="spacingAndGlyphs">DS?</text>
<path d="M24.7 104.9 H138" stroke="#000" stroke-width="2"/><path d="M70 83 V127 L92.7 104.9 Z" fill="#00b400" stroke="#000" stroke-width="2"/><path d="M92.7 82 V128" stroke="#000" stroke-width="2"/>
<path d="M93 73 L104 62.5 M101.3 82.5 L112.5 72" stroke="#000" stroke-width="1.8"/><path d="M109.5 57.5 L100 60.5 L106.5 67 Z M118 67 L108.5 70 L115 76.5 Z" fill="#000"/>
<text x="67.3" y="148.6" font-family="Liberation Serif" font-size="20.5" fill="#10107a" textLength="192" lengthAdjust="spacingAndGlyphs">LED_GREEN_K1A2-2</text></svg><div class="t" style="left:905.7px;top:523px;color:#eee;transform:scaleX(0.9173);transform-origin:0 0">SYM-0029-00236-1</div><div class="t" style="left:1124px;top:523px;color:#eee">Rev.1</div><div class="ab" style="left:1158px;top:522px;width:14px;height:14px;background:#0a7a0a;border:1px solid #111"></div><div class="ab" style="left:902px;top:544px;width:270px;height:1px;background:#2c2c2c"></div><div class="ab" style="left:902px;top:554px;width:270px;height:197px;background:#000;border-radius:3px"></div><svg class="ab" style="left:902px;top:554px" width="270" height="197" viewBox="0 0 270 197">
<defs><pattern id="hx" width="6.4" height="6.4" patternUnits="userSpaceOnUse" patternTransform="rotate(45)"><path d="M0 0.5H6.4M0.5 0V6.4" stroke="#ff22ff" stroke-width="1.1"/></pattern></defs>
<rect x="61.6" y="26.6" width="147.7" height="56.7" fill="#800080" stroke="#008000" stroke-width="3.2"/>
<rect x="65.9" y="31.5" width="138.2" height="46.3" fill="#ff0000"/>
<rect x="89" y="32.1" width="92" height="44.4" rx="3" fill="#ff0000" stroke="#ff00ff" stroke-width="6.4"/>
<rect x="112.2" y="34.7" width="45.6" height="39.3" fill="#800080"/>
<rect x="118" y="34.7" width="34" height="39.3" fill="#000"/>
<rect x="91.6" y="34.7" width="86.8" height="39.3" fill="url(#hx)"/>
<path d="M134.7 41.7 V68.9 M121.7 54.7 H148.9" stroke="#008000" stroke-width="5" stroke-linecap="round"/>
<path d="M118.5 98.4 V155.5 M147.6 98.4 V155.5" stroke="#ffff00" stroke-width="10.9" stroke-linecap="round"/><path d="M147.6 98.4 L118.5 127 L147.6 155.5" stroke="#ffff00" stroke-width="10.9" stroke-linecap="round" stroke-linejoin="round" fill="none"/>
<rect x="18" y="143" width="23" height="23" fill="#f0f0f0" stroke="#999"/><text x="22" y="159" font-family="Liberation Sans" font-size="11" fill="#222">3D</text>
<text x="10.2" y="186" font-family="Liberation Sans" font-size="11" fill="#eee" textLength="155.4" lengthAdjust="spacingAndGlyphs">SMD, 2-Leads, Body 1.6x0.8mm</text></svg><div class="t" style="left:903px;top:761px;color:#eee;transform:scaleX(0.9016);transform-origin:0 0">WE-150060VS75000_V</div><div class="t" style="left:1124px;top:761px;color:#eee">Rev.1</div><div class="ab" style="left:1158px;top:760px;width:14px;height:14px;background:#0a7a0a;border:1px solid #111"></div><div class="ab" style="left:896px;top:797px;width:0;height:0;border-left:5px solid transparent;border-bottom:5px solid #ddd"></div><div class="t" style="left:903px;top:792px;font-weight:bold;color:#f0f0f0">Datasheets</div><div class="ab" style="left:894px;top:811px;width:286px;height:36px;background:#454545;border-radius:3px;overflow:hidden"><svg class="ab" style="left:10px;top:9px" width="12" height="14" viewBox="0 0 12 14"><path d="M1 1H8L11 4V13H1Z" fill="#fff" stroke="#c33"/><path d="M3 9 Q6 4 9 10" stroke="#c33" fill="none"/></svg><div class="t lnk" style="left:28.2px;top:10px;transform:scaleX(0.9652);transform-origin:0 0">Datasheet 1 (IHS Markit)</div><svg class="ab" style="left:10px;top:29px" width="12" height="14" viewBox="0 0 12 14"><path d="M1 1H8L11 4V13H1Z" fill="#fff" stroke="#c33"/></svg><div class="t lnk" style="left:28.2px;top:30px;transform:scaleX(0.9442);transform-origin:0 0">Datasheet 2 (Digi-Key)</div></div><div class="ab" style="left:1184px;top:202px;width:0;height:0;border-left:3.5px solid transparent;border-right:3.5px solid transparent;border-bottom:4px solid #777"></div><div class="ab" style="left:1184px;top:213px;width:6px;height:530px;background:#8a8a8a;border-radius:3px"></div><div class="ab" style="left:1184px;top:838px;width:0;height:0;border-left:3.5px solid transparent;border-right:3.5px solid transparent;border-top:4px solid #777"></div><div class="ab" style="left:1103px;top:56px;width:180px;height:120px;background:#3a3a3a;border:1px solid #222"></div><div class="t" style="left:1120.6px;top:76px;color:#eee;transform:scaleX(0.9424);transform-origin:0 0">Currency</div><div class="ab" style="left:1120px;top:93px;width:146px;height:22px;background:linear-gradient(#5a5a5a,#484848);border:1px solid #8fb7df;border-radius:3px"></div><svg class="ab" style="left:1131px;top:97px" width="21" height="14" viewBox="0 0 21 14"><rect width="21" height="14" fill="#fff"/><rect y="0" width="21" height="1.1" fill="#d22"/><rect y="2" width="21" height="1.1" fill="#d22"/><rect y="4" width="21" height="1.1" fill="#d22"/><rect y="6" width="21" height="1.1" fill="#d22"/><rect y="8" width="21" height="1.1" fill="#d22"/><rect y="10" width="21" height="1.1" fill="#d22"/><rect y="12" width="21" height="1.1" fill="#d22"/><rect width="9" height="7.5" fill="#2a3f8f"/></svg><div class="t" style="left:1158.3px;top:97px;color:#f0f0f0;transform:scaleX(0.8968);transform-origin:0 0">USD</div><div class="ab" style="left:1251px;top:102px;width:0;height:0;border-left:4.5px solid transparent;border-right:4.5px solid transparent;border-top:5px solid #fff"></div><div class="ab" style="left:1120px;top:124px;width:15px;height:16px;background:#4a4a4a;border:1px solid #262626;border-radius:3px"></div><div class="t" style="left:1140.5px;top:125px;color:#eee;transform:scaleX(0.9384);transform-origin:0 0">Exclude Invalid SPNs</div><div class="t lnk" style="left:1120.6px;top:150px;border-bottom:1px dashed #86b8ea;line-height:13px;transform:scaleX(0.9509);transform-origin:0 0">Part Providers Preferences...</div><svg class="ab" style="left:1124px;top:49px" width="14" height="20" viewBox="0 0 14 20"><path d="M1 1 V15 L4.5 11.5 L7 17.5 L9.5 16.5 L7 10.5 L12 10.5 Z" fill="#fff" stroke="#000" stroke-width="1"/></svg>
<div class="ab" style="left:0;top:0;width:207px;height:94px;border:4px solid #ff6c00"></div><svg class="ab" style="left:0;top:0" width="260" height="190" viewBox="0 0 260 190"><path d="M203.7 90 L238 158.6" stroke="#ff6c00" stroke-width="4"/><path d="M229 163.5 L247 155 L247 177 Z" fill="#ff6c00"/></svg><div class="ab" style="left:247px;top:177px;width:420px;height:189px;background:#ff6c00"></div><div class="ab" style="left:251px;top:181px;width:411px;height:181px;overflow:hidden;background:#3c3c3c"><div class="ab" style="left:0;top:0;width:206px;height:91px;transform:scale(2);transform-origin:0 0"><div class="ab" style="left:0;top:0;width:206px;height:23px;background:#6384a8"></div><div class="t" style="left:5px;top:4px;font-weight:bold;font-size:12px;color:#fff;transform:scaleX(0.9848);transform-origin:0 0">Manufacturer Part Search</div><div class="ab" style="left:8px;top:31px;width:28px;height:25px;background:#6384a8;border:1px solid #262626;border-radius:3px"></div><svg class="ab" style="left:14px;top:36px" width="16" height="16" viewBox="0 0 16 16"><ellipse cx="7.9" cy="4.3" rx="5.3" ry="2.2" fill="none" stroke="#fff" stroke-width="1.9"/><path d="M2.6 4.8 Q8 8.2 13.2 4.8 L9.1 9.6 L9.1 14 L6.5 14 L6.5 9.6 Z" fill="#fff"/></svg><div class="ab" style="left:44px;top:31px;width:156px;height:25px;background:linear-gradient(#666,#545454);border:1px solid #262626;border-radius:3px"></div><svg class="ab" style="left:51px;top:36px" width="14" height="15" viewBox="0 0 14 15"><rect x="2" y="2" width="5" height="9" fill="#9a9a9a"/><rect x="6" y="1" width="6" height="10" rx="2.5" fill="#c8ccd0"/><rect x="7" y="11" width="1" height="4" fill="#bbb"/><rect x="10" y="11" width="1" height="4" fill="#bbb"/><rect x="0" y="4" width="2" height="1" fill="#888"/><rect x="0" y="7" width="2" height="1" fill="#888"/></svg><div class="t" style="left:68px;top:37px;color:#f0f0f0;transform:scaleX(0.8283);transform-origin:0 0">LEDs</div><div class="ab" style="left:186px;top:42px;width:0;height:0;border-left:4.25px solid transparent;border-right:4.25px solid transparent;border-top:4.5px solid #fff"></div><div class="ab" style="left:8px;top:64px;width:192px;height:40px;background:#393939;border:1px solid #242424"></div><div class="ab" style="left:9px;top:65px;width:190px;height:24px;background:#454545;border-bottom:1px solid #2a2a2a"></div><div class="t" style="left:19px;top:70px;font-weight:bold;font-size:11.5px;color:#fff;transform:scaleX(0.9087);transform-origin:0 0">Filters</div></div></div><div class="ab" style="left:260px;top:237px;width:69px;height:63px;border:4px solid #5cf07e;border-radius:11px"></div><div class="ab" style="left:332px;top:237px;width:326px;height:63px;border:4px solid #5cf07e;border-radius:11px"></div><div class="t" style="left:303px;top:260px;font-size:31px;line-height:32px;color:#5cf07e">2</div><div class="t" style="left:502px;top:256px;font-size:29px;line-height:32px;color:#5cf07e">1</div>
</body></html>
